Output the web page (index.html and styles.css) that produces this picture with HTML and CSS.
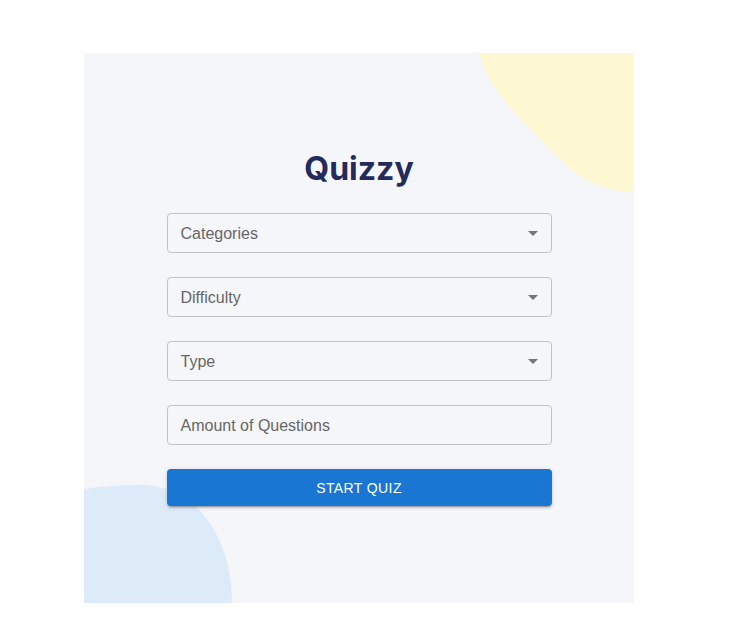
FILE: index.html
```html
<!DOCTYPE html>
<html>
<head>
<meta charset="utf-8">
<link rel="stylesheet" href="styles.css">
</head>
<body>
<div class="card">
  <div class="blob blob-yellow"></div>
  <div class="blob blob-blue"></div>
  <form class="form">
    <h1 class="title">Quizzy</h1>
    <div class="field select">
      <span class="label">Categories</span>
      <svg class="arrow" width="10" height="5" viewBox="0 0 10 5"><path d="M0 0h10L5 5z" fill="#757575"/></svg>
    </div>
    <div class="field select">
      <span class="label">Difficulty</span>
      <svg class="arrow" width="10" height="5" viewBox="0 0 10 5"><path d="M0 0h10L5 5z" fill="#757575"/></svg>
    </div>
    <div class="field select">
      <span class="label">Type</span>
      <svg class="arrow" width="10" height="5" viewBox="0 0 10 5"><path d="M0 0h10L5 5z" fill="#757575"/></svg>
    </div>
    <div class="field">
      <span class="label">Amount of Questions</span>
    </div>
    <button type="button" class="btn">START QUIZ</button>
  </form>
</div>
</body>
</html>
```

FILE: styles.css
```css
* { box-sizing: border-box; }
html, body { margin: 0; padding: 0; background: #ffffff; }
body { padding: 53px 0 0 84px; font-family: "Liberation Sans", Arial, sans-serif; }

.card {
  position: relative;
  width: 550px;
  height: 550px;
  background: #f5f6fa;
  overflow: hidden;
}

.blob { position: absolute; }
.blob-yellow {
  right: 0;
  top: 0;
  width: 155px;
  height: 139px;
  background: #fef8d2;
  clip-path: path("M0 0 C 8 30, 30 55, 60 85 C 90 118, 115 139, 155 139 L155 0 Z");
}
.blob-blue {
  left: 0;
  bottom: 0;
  width: 148px;
  height: 118px;
  background: #ddeaf8;
  clip-path: path("M0 4 C 20 1, 40 0, 58 0 C 110 0, 148 50, 148 118 L0 118 Z");
}

.form {
  position: relative;
  display: flex;
  flex-direction: column;
  align-items: stretch;
  width: 385px;
  margin: 0 auto;
  padding-top: 96px;
  gap: 24px;
}

.title {
  margin: 0;
  height: 40px;
  line-height: 40px;
  text-align: center;
  font-family: Inter, Roboto, sans-serif;
  font-weight: 700;
  font-size: 32px;
  color: #232b5c;
}

.field {
  height: 40px;
  border: 1px solid #c2c3c6;
  border-radius: 4px;
  display: flex;
  align-items: center;
  justify-content: space-between;
  padding: 1px 13px 0 13px;
}
.label {
  font-size: 16px;
  color: #666666;
}
.arrow { display: block; margin-top: -1px; }

.btn {
  height: 37px;
  border: 0;
  border-radius: 4px;
  background: #1976d2;
  color: #ffffff;
  font-family: "Liberation Sans", Arial, sans-serif;
  font-size: 14px;
  letter-spacing: 0.4px;
  box-shadow: 0 3px 1px -2px rgba(0,0,0,0.2), 0 2px 2px 0 rgba(0,0,0,0.14), 0 1px 5px 0 rgba(0,0,0,0.12);
  padding: 0;
}
```
